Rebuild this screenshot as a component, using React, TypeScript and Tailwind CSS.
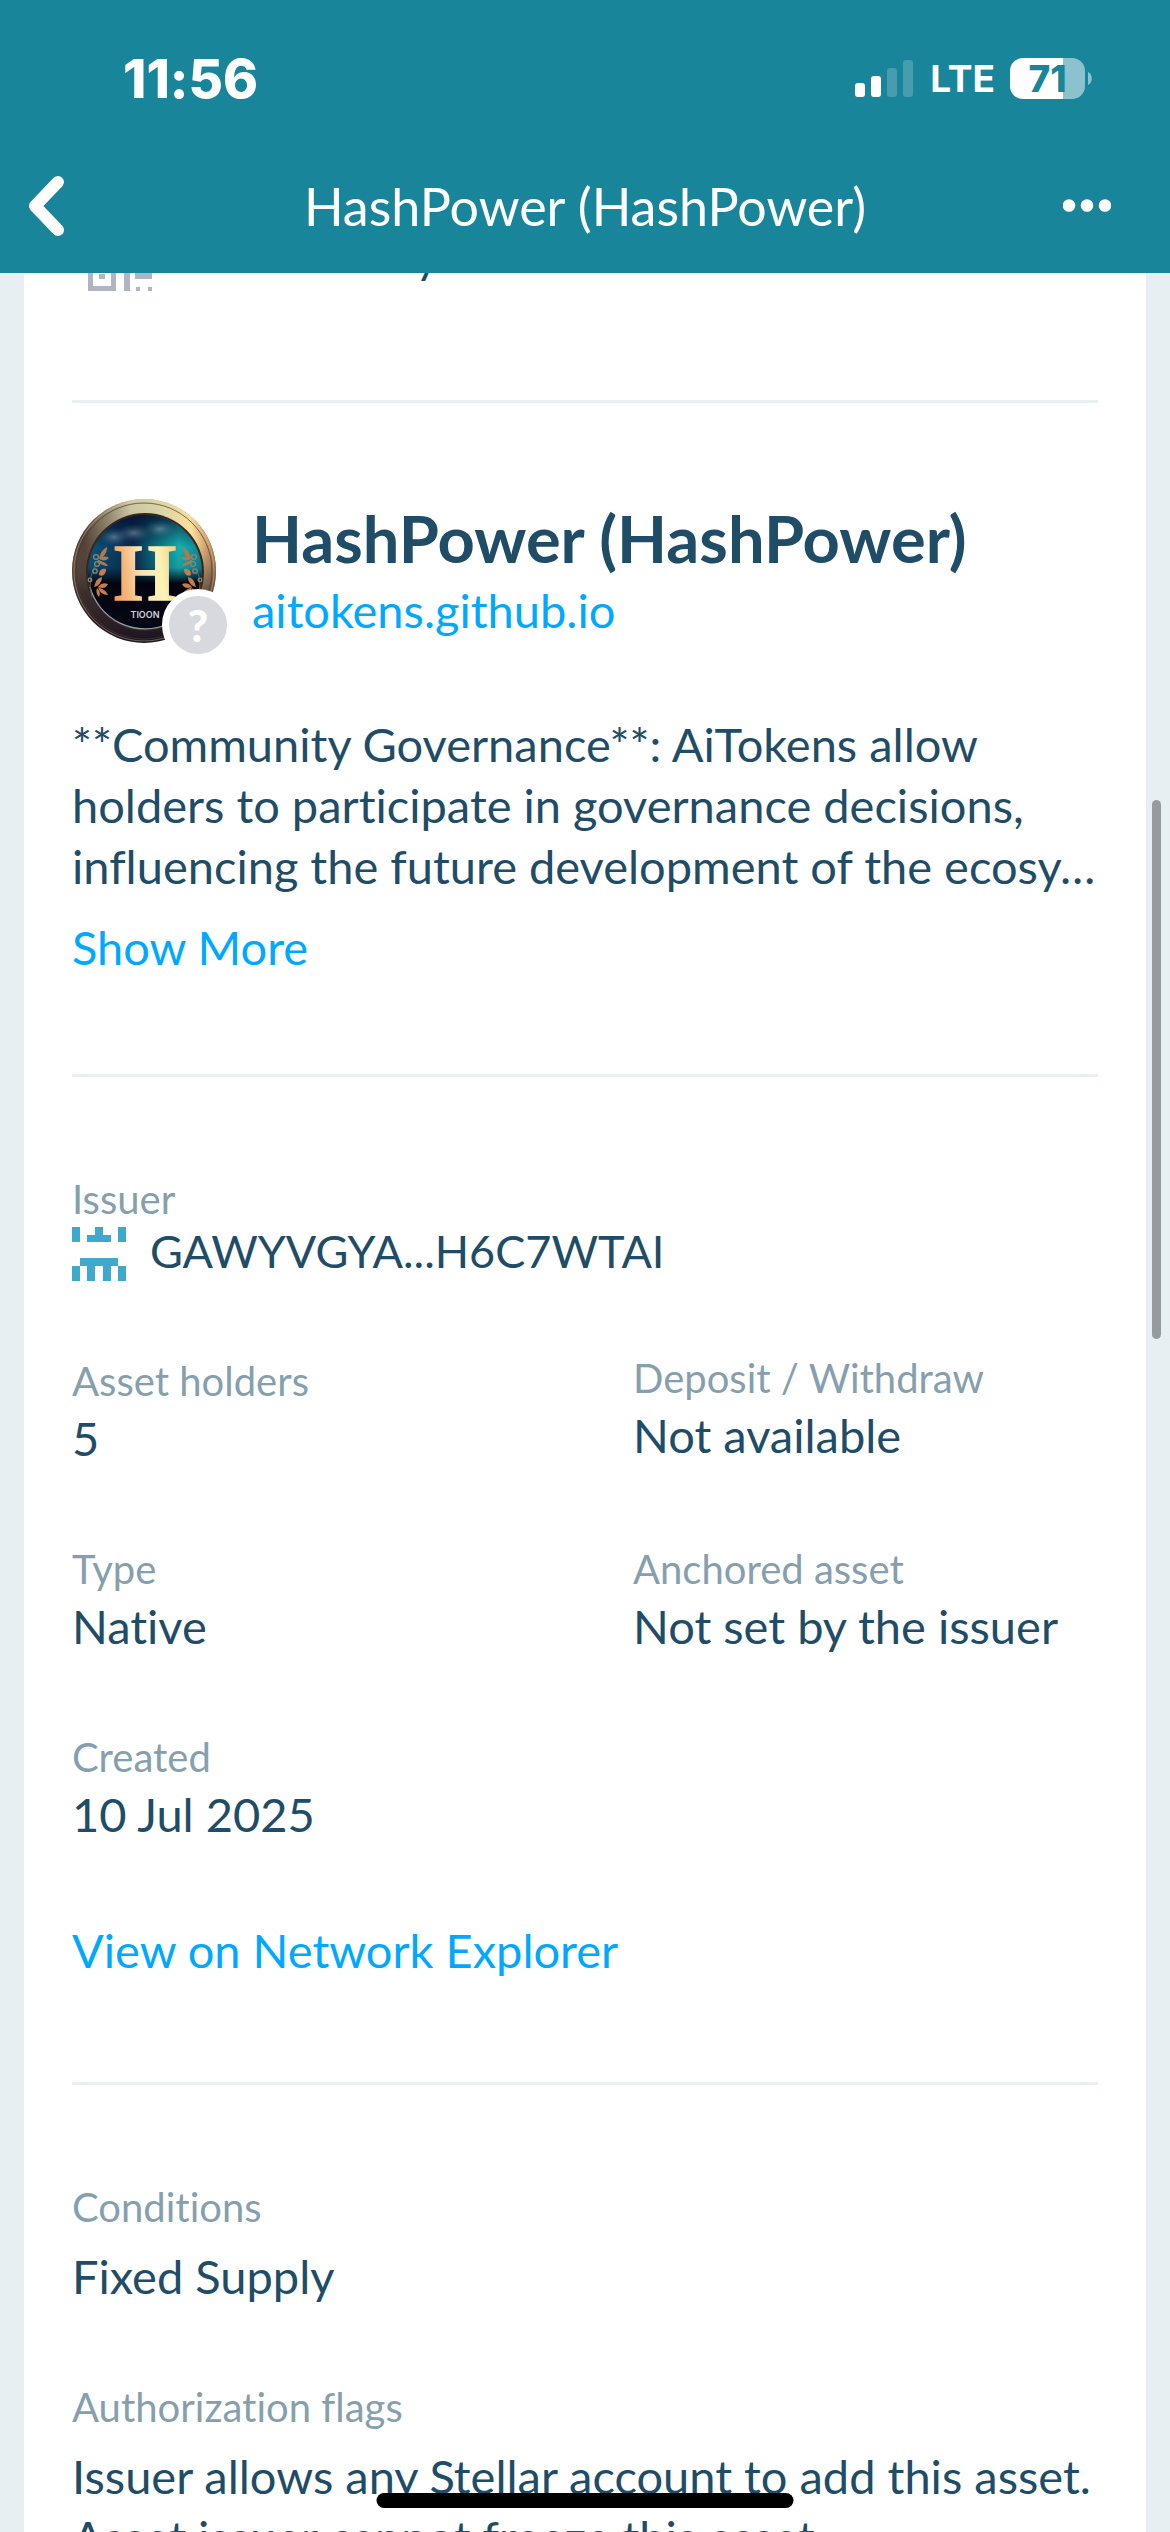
import type { ReactNode } from "react";

const IDENTICON = ["1001001", "1011101", "0000000", "0000000", "0111110", "1010101", "1010101"];

function StatusBar() {
  return (
    <div className="flex h-[153px] items-center justify-between pt-1 pr-[78px] pl-[123px] font-[Inter,sans-serif]">
      <span className="text-[53px] leading-[60px] font-extrabold">11:56</span>
      <div className="flex items-center">
        <svg className="mr-4 h-[37px] w-[59px]" viewBox="0 0 59 37" fill="#fff" aria-hidden="true">
          <rect x="0" y="23" width="10" height="14" rx="3" />
          <rect x="16" y="16" width="10" height="21" rx="3" />
          <rect x="32" y="8" width="10" height="29" rx="3" opacity="0.2" />
          <rect x="48" y="0" width="10" height="37" rx="3" opacity="0.2" />
        </svg>
        <span className="mr-[15px] text-[37px] leading-[48px] font-bold">LTE</span>
        <div className="flex h-[41px] w-[75px] items-center justify-center rounded-[13px] bg-linear-to-r from-white from-71% to-[#8cc2cd] to-71% text-[37px] leading-10 font-extrabold text-[#19859a]">
          71
        </div>
        <svg className="ml-[3px] h-[13px] w-1" viewBox="0 0 4 13" aria-hidden="true">
          <path d="M0 0C5 2 5 11 0 13Z" fill="#8cc2cd" />
        </svg>
      </div>
    </div>
  );
}

function Header() {
  return (
    <header className="shrink-0 bg-[#19859a] pb-[15px] text-white">
      <StatusBar />
      <nav className="grid h-[105px] grid-cols-[120px_1fr_120px] items-center">
        <button type="button" aria-label="Back" className="flex h-full items-center pl-7">
          <svg className="h-[60px] w-9" viewBox="0 0 36 60" fill="none" aria-hidden="true">
            <path d="M30 6L7 30L30 54" stroke="#fff" strokeWidth="12" strokeLinecap="round" strokeLinejoin="round" />
          </svg>
        </button>
        <h1 className="text-center text-[52px] leading-[64px]">HashPower (HashPower)</h1>
        <button type="button" aria-label="More options" className="flex h-full items-center justify-end pr-[59px]">
          <svg className="h-[13px] w-12" viewBox="0 0 48 13" fill="#fff" aria-hidden="true">
            <circle cx="6" cy="6.5" r="6.3" />
            <circle cx="24" cy="6.5" r="6.3" />
            <circle cx="42" cy="6.5" r="6.3" />
          </svg>
        </button>
      </nav>
    </header>
  );
}

function QrIcon() {
  return (
    <svg className="h-[66px] w-16" viewBox="0 -2 64 66" aria-hidden="true">
      <g fill="none" stroke="#b0b5c3" strokeWidth="5">
        <rect x="2.5" y="2.5" width="23" height="23" />
        <rect x="38.5" y="2.5" width="23" height="23" />
        <rect x="2.5" y="38.5" width="23" height="23" />
      </g>
      <g fill="#b0b5c3">
        <rect x="11" y="11" width="6" height="6" />
        <rect x="47" y="11" width="6" height="6" />
        <rect x="11" y="47" width="6" height="5" />
        <rect x="36" y="36" width="6" height="28" />
        <rect x="36" y="36" width="20" height="10" />
        <rect x="47" y="46" width="17" height="6" />
        <rect x="48" y="60" width="4" height="4" />
        <rect x="60" y="60" width="4" height="4" />
      </g>
    </svg>
  );
}

function Sprig() {
  return (
    <g fill="none" strokeLinecap="round">
      <path d="M20 98C17 88 17 76 24 66" stroke="#6d5a49" strokeWidth="1" />
      <g stroke="#8f8577" strokeWidth="1.3">
        <circle cx="24" cy="58" r="2.4" />
        <circle cx="25" cy="65" r="2.4" />
        <circle cx="23" cy="72" r="2.2" />
        <circle cx="18" cy="81" r="1.8" />
      </g>
      <g fill="#b07a4c">
        <path d="M27 60C28 54 31 50 35 48C35 54 32 58 27 60Z" />
        <path d="M27 60C31 57 34 57 37 59C34 62 31 62 27 60Z" />
        <path d="M25 60C30 63 34 63 36 67C31 67 27 65 25 60Z" />
      </g>
      <g fill="#c87b4b">
        <path d="M27 76C27 71 30 69 34 70C34 75 31 78 27 76Z" />
        <path d="M22 88C24 82 24 80 30 78C30 83 27 87 22 88Z" />
        <path d="M26 88C30 83 33 84 36 85C34 89 31 90 26 88Z" />
        <path d="M26 88C30 90 34 91 36 96C31 96 27 93 26 88Z" />
        <path d="M25 89C29 93 28 95 27 98C24 95 24 92 25 89Z" />
      </g>
    </g>
  );
}

function Coin() {
  return (
    <svg className="size-36" viewBox="0 0 144 144" role="img" aria-label="HashPower logo">
      <defs>
        <linearGradient id="rim" x1="0.35" y1="0" x2="0.5" y2="1">
          <stop offset="0" stopColor="#d9b78c" />
          <stop offset="0.3" stopColor="#8d7259" />
          <stop offset="0.6" stopColor="#3c2d2c" />
          <stop offset="1" stopColor="#1b1420" />
        </linearGradient>
        <linearGradient id="rimShine" x1="0" y1="0.5" x2="1" y2="0.4">
          <stop offset="0.1" stopColor="#3d302c" stopOpacity="0.8" />
          <stop offset="0.45" stopColor="#cdcdaa" stopOpacity="0.85" />
          <stop offset="0.65" stopColor="#d9d5a8" />
          <stop offset="0.85" stopColor="#fbdf9b" />
          <stop offset="1" stopColor="#b97e55" />
        </linearGradient>
        <linearGradient id="shineFade" x1="0" y1="0" x2="0" y2="1">
          <stop offset="0.3" stopColor="#fff" />
          <stop offset="0.8" stopColor="#000" />
        </linearGradient>
        <mask id="shineMask">
          <rect width="144" height="144" fill="url(#shineFade)" />
        </mask>
        <linearGradient id="sky" x1="0" y1="0.5" x2="1" y2="0.5">
          <stop offset="0" stopColor="#0c5578" />
          <stop offset="0.4" stopColor="#0a2a50" />
          <stop offset="0.6" stopColor="#0c7080" />
          <stop offset="0.8" stopColor="#17b0b0" />
          <stop offset="1" stopColor="#0b8394" />
        </linearGradient>
        <linearGradient id="night" x1="0" y1="0" x2="0" y2="1">
          <stop offset="0" stopColor="#03112f" stopOpacity="0.8" />
          <stop offset="0.28" stopColor="#03112f" stopOpacity="0" />
          <stop offset="0.46" stopColor="#02081c" stopOpacity="0.1" />
          <stop offset="0.6" stopColor="#02040f" />
          <stop offset="1" stopColor="#060814" />
        </linearGradient>
        <linearGradient id="gold" x1="0" y1="0.6" x2="1" y2="0.4">
          <stop offset="0" stopColor="#f0a263" />
          <stop offset="0.2" stopColor="#f6b87c" />
          <stop offset="0.45" stopColor="#f9e3b4" />
          <stop offset="0.75" stopColor="#fbf3b6" />
          <stop offset="1" stopColor="#f6cf86" />
        </linearGradient>
        <radialGradient id="cloud">
          <stop offset="0" stopColor="#8fa6b8" stopOpacity="0.55" />
          <stop offset="1" stopColor="#3c6480" stopOpacity="0" />
        </radialGradient>
      </defs>
      <circle cx="72" cy="72" r="72" fill="url(#rim)" />
      <circle cx="72" cy="72" r="72" fill="url(#rimShine)" mask="url(#shineMask)" />
      <circle cx="72" cy="72" r="70" fill="none" stroke="#efcf9f" strokeOpacity="0.4" />
      <circle cx="72" cy="72" r="68" fill="none" stroke="#4a382f" strokeOpacity="0.7" />
      <circle cx="73" cy="73" r="59" fill="#3b241d" />
      <circle cx="73" cy="73" r="57" fill="url(#sky)" />
      <circle cx="73" cy="73" r="57" fill="url(#night)" />
      <ellipse cx="62" cy="34" rx="18" ry="9" fill="url(#cloud)" />
      <ellipse cx="88" cy="30" rx="16" ry="9" fill="url(#cloud)" />
      <ellipse cx="42" cy="38" rx="15" ry="9" fill="url(#cloud)" />
      <path d="M18 88A57 57 0 0 0 96 125" fill="none" stroke="#8aa0b0" strokeWidth="1.2" />
      <Sprig />
      <g transform="translate(146 0) scale(-1 1)">
        <Sprig />
      </g>
      <text x="73" y="101" textAnchor="middle" fontFamily="Liberation Serif, serif" fontWeight="700" fontSize="80" fill="url(#gold)" stroke="url(#gold)" strokeWidth="1.5">
        H
      </text>
      <text x="73" y="119" textAnchor="middle" fontFamily="Inter, sans-serif" fontWeight="600" fontSize="9" fill="#cfd3d8">
        TIOON
      </text>
    </svg>
  );
}

function Identicon() {
  return (
    <svg className="size-[54px]" viewBox="0 0 7 7" shapeRendering="crispEdges" fill="#3fa9cd" aria-hidden="true">
      {IDENTICON.flatMap((row, y) =>
        [...row].map((cell, x) => (cell === "1" ? <rect key={`${x}-${y}`} x={x} y={y} width="1" height="1" /> : null)),
      )}
    </svg>
  );
}

function Label({ children }: { children: ReactNode }) {
  return <dt className="text-[40px] leading-[48px] text-[#869fae]">{children}</dt>;
}

function Field({ label, value }: { label: string; value: string }) {
  return (
    <div className="flex flex-col gap-[3px]">
      <Label>{label}</Label>
      <dd className="text-[47px] leading-[61px]">{value}</dd>
    </div>
  );
}

function Divider() {
  return <hr className="h-[3px] border-0 bg-[#e7f0f2]" />;
}

export default function App() {
  return (
    <div className="relative flex h-screen flex-col overflow-hidden bg-[#e7eff2] font-[Lato,sans-serif] text-[#1f4c66] [font-variant-ligatures:none]">
      <Header />
      <div className="min-h-0 flex-1 overflow-hidden px-6">
        <main className="bg-white px-12">
          <button type="button" className="-mt-12 mb-[109px] flex items-start gap-16 pl-4 text-[47px] leading-[61px]">
            <QrIcon />
            Create Payment
          </button>
          <Divider />

          <section className="flex flex-col items-start pt-24 pb-24">
            <div className="flex items-center gap-9">
              <div className="relative shrink-0">
                <Coin />
                <span className="absolute -right-[18px] -bottom-[18px] flex size-[72px] items-center justify-center rounded-full border-[7px] border-white bg-[#d8d9df] text-[44px] leading-none font-black text-white">
                  ?
                </span>
              </div>
              <div className="flex flex-col items-start gap-1.5">
                <h2 className="text-[65px] leading-[72px] font-bold">HashPower (HashPower)</h2>
                <a href="https://aitokens.github.io" className="text-[47px] leading-[61px] text-[#00a9ff]">
                  aitokens.github.io
                </a>
              </div>
            </div>
            <p className="mt-[71px] text-[47px] leading-[61px]">
              **Community Governance**: AiTokens allow
              <br />
              holders to participate in governance decisions,
              <br />
              <span className="whitespace-nowrap">influencing the future development of the ecosy…</span>
            </p>
            <button type="button" className="mt-5 text-[47px] leading-[61px] text-[#00a9ff]">
              Show More
            </button>
          </section>
          <Divider />

          <section className="pt-[98px] pb-[101px]">
            <dl>
              <Label>Issuer</Label>
              <dd className="mt-1 flex items-start gap-6 text-[45px] leading-[48px]">
                <Identicon />
                GAWYVGYA...H6C7WTAI
              </dd>
            </dl>
            <div className="grid grid-cols-2 gap-24">
              <dl className="flex flex-col gap-[76px] pt-[76px]">
                <Field label="Asset holders" value="5" />
                <Field label="Type" value="Native" />
                <Field label="Created" value="10 Jul 2025" />
              </dl>
              <dl className="flex flex-col gap-[79px] pt-[73px]">
                <Field label="Deposit / Withdraw" value="Not available" />
                <Field label="Anchored asset" value="Not set by the issuer" />
              </dl>
            </div>
            <a href="#explorer" className="mt-[75px] block text-[47px] leading-[61px] text-[#00a9ff]">
              View on Network Explorer
            </a>
          </section>
          <Divider />

          <dl className="flex flex-col pt-[98px]">
            <Label>Conditions</Label>
            <dd className="mt-[15px] mb-[76px] text-[47px] leading-[61px]">Fixed Supply</dd>
            <Label>Authorization flags</Label>
            <dd className="mt-[15px] text-[47px] leading-[61px]">
              <p className="whitespace-nowrap">Issuer allows any Stellar account to add this asset.</p>
              <p>Asset issuer cannot freeze this asset.</p>
            </dd>
          </dl>
        </main>
      </div>
      <div className="absolute top-[800px] right-[9px] h-[539px] w-[9px] rounded-full bg-[#959b9e]" />
      <div className="absolute bottom-6 left-1/2 h-[15px] w-[417px] -translate-x-1/2 rounded-full bg-black" />
    </div>
  );
}
